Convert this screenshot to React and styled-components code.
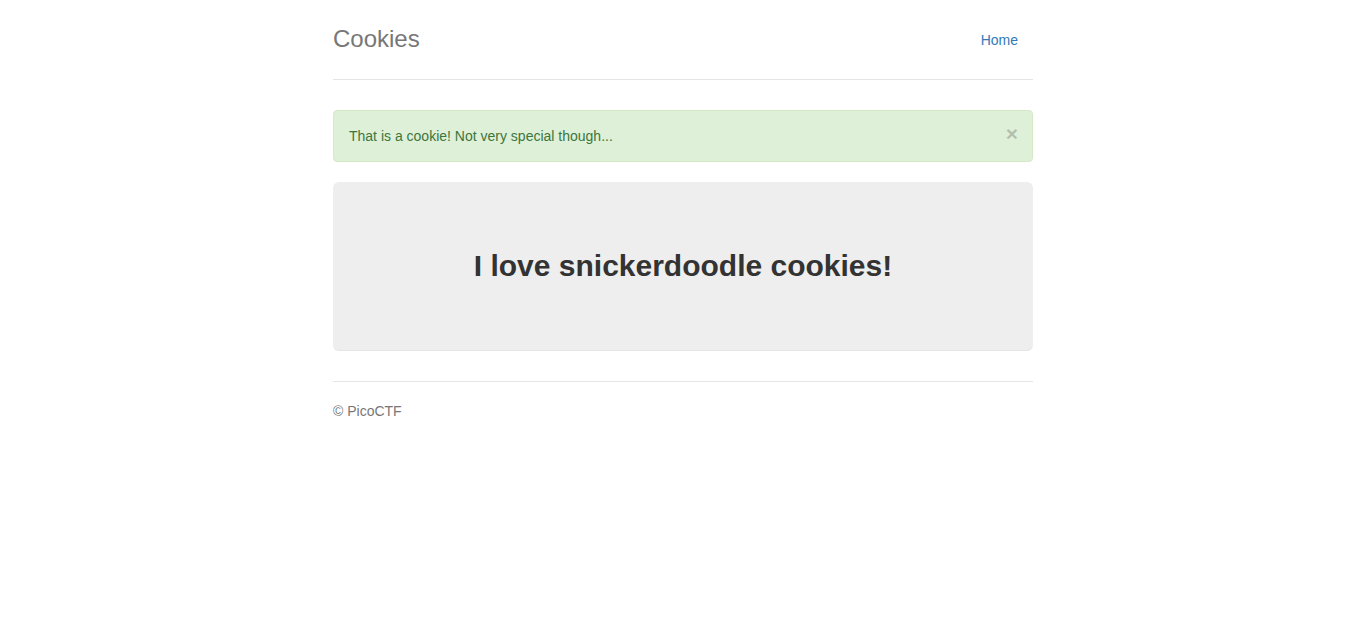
import React from "react";
import styled, { createGlobalStyle } from "styled-components";

const Global = createGlobalStyle`
  * { box-sizing: border-box; }
  html, body { margin: 0; padding: 0; background: #fff; }
  body {
    font-family: "Liberation Sans", Arial, Helvetica, sans-serif;
    font-size: 14px;
    line-height: 1.42857143;
    color: #333;
    padding-top: 19px;
    padding-bottom: 20px;
  }
`;

const Container = styled.div`
  max-width: 730px;
  margin: 0 auto;
  padding: 0 15px;
`;

const Header = styled.div`
  display: flex;
  align-items: center;
  justify-content: space-between;
  padding-bottom: 20px;
  border-bottom: 1px solid #e5e5e5;
  margin-bottom: 30px;
`;

const Brand = styled.h3`
  margin: 0;
  font-size: 24px;
  font-weight: 500;
  line-height: 40px;
  color: #777;
`;

const Nav = styled.ul`
  list-style: none;
  margin: 0;
  padding: 0;
  display: flex;
`;

const NavLink = styled.a`
  display: block;
  padding: 11px 15px 9px;
  color: #337ab7;
  text-decoration: none;
  border-radius: 4px;
  line-height: 20px;
`;

const Alert = styled.div`
  display: flex;
  align-items: flex-start;
  justify-content: space-between;
  height: 52px;
  padding: 15px 35px 15px 15px;
  margin-bottom: 20px;
  border: 1px solid #d6e9c6;
  border-radius: 4px;
  background: #dff0d8;
  color: #3c763d;
  line-height: 20px;
`;

const Close = styled.button`
  position: relative;
  top: -2px;
  right: -21px;
  height: 20px;
  padding: 0;
  border: 0;
  background: transparent;
  font-family: "Liberation Sans", Arial, sans-serif;
  font-size: 21px;
  font-weight: bold;
  line-height: 20px;
  color: #000;
  opacity: 0.2;
  text-shadow: 0 1px 0 #fff;
  cursor: pointer;
`;

const Jumbotron = styled.div`
  padding: 48px 60px;
  margin-bottom: 30px;
  background: #eee;
  border-radius: 6px;
  border-bottom: 1px solid #e5e5e5;
  text-align: center;
`;

const Lead = styled.p`
  margin: 0;
  height: 72px;
  display: flex;
  align-items: center;
  justify-content: center;
  font-size: 30px;
  font-weight: bold;
  color: #333;
`;

const Footer = styled.footer`
  padding-top: 19px;
  border-top: 1px solid #e5e5e5;
  color: #777;
`;

const FooterText = styled.p`
  margin: 0 0 10px;
  line-height: 20px;
`;

export default function App() {
  return (
    <>
      <Global />
      <Container>
        <Header>
          <Brand>Cookies</Brand>
          <Nav>
            <li>
              <NavLink href="#">Home</NavLink>
            </li>
          </Nav>
        </Header>
        <Alert>
          <span>That is a cookie! Not very special though...</span>
          <Close aria-label="Close">×</Close>
        </Alert>
        <Jumbotron>
          <Lead>I love snickerdoodle cookies!</Lead>
        </Jumbotron>
        <Footer>
          <FooterText>© PicoCTF</FooterText>
        </Footer>
      </Container>
    </>
  );
}
